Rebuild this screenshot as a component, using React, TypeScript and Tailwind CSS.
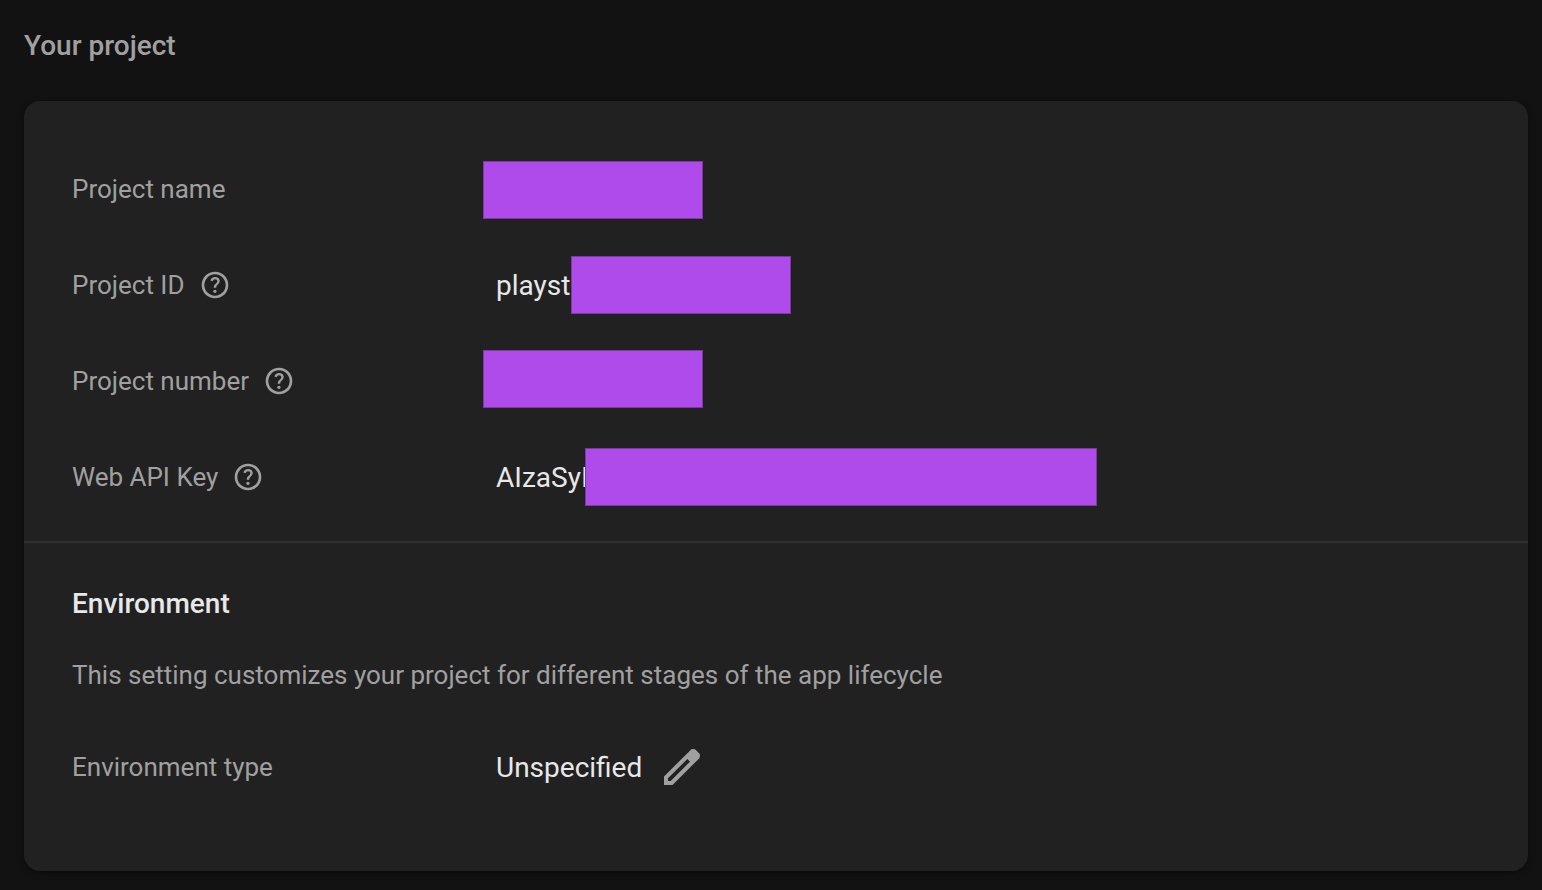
import React from "react";

const HelpIcon = () => (
	<svg viewBox="0 -960 960 960" className="size-8 fill-current" aria-hidden="true">
		<path d="M478-240q21 0 35.5-14.5T528-290q0-21-14.5-35.5T478-340q-21 0-35.5 14.5T428-290q0 21 14.5 35.5T478-240Zm-36-154h74q0-33 7.5-52t42.5-52q26-26 41-49.5t15-56.5q0-56-41-86t-97-30q-57 0-92.5 30T342-618l66 26q5-18 22.5-39t53.5-21q32 0 48 17.5t16 38.5q0 20-12 37.5T506-526q-44 39-54 59t-10 73Zm38 314q-83 0-156-31.5T197-197q-54-54-85.5-127T80-480q0-83 31.5-156T197-763q54-54 127-85.5T480-880q83 0 156 31.5T763-763q54 54 85.5 127T880-480q0 83-31.5 156T763-197q-54 54-127 85.5T480-80Zm0-80q134 0 227-93t93-227q0-134-93-227t-227-93q-134 0-227 93t-93 227q0 134 93 227t227 93Z" />
	</svg>
);

const EditIcon = () => (
	<svg viewBox="0 0 24 24" className="size-12 fill-current" aria-hidden="true">
		<path
			fillRule="evenodd"
			d="M3 21v-4.25L16.2 3.58q.3-.28.66-.43Q17.23 3 17.63 3q.4 0 .77.15.38.15.65.45l1.38 1.4q.3.28.43.65.14.37.14.75 0 .4-.14.76-.14.37-.43.67L7.25 21H3Zm2-2h1.33l9.67-9.68-1.32-1.32L5 17.67V19Z"
		/>
	</svg>
);

const rows = [
	{ label: "Project name", help: false, value: "", mask: "top-5 -left-[13px] w-[220px]" },
	{ label: "Project ID", help: true, value: "playsto", mask: "top-[19px] left-[75px] w-[220px]" },
	{ label: "Project number", help: true, value: "", mask: "top-[17px] -left-[13px] w-[220px]" },
	{ label: "Web API Key", help: true, value: "AIzaSyI", mask: "top-[19px] left-[89px] w-[512px]" },
];

const App = () => {
	return (
		<main className="min-h-screen bg-[#121212] pt-7 pr-3.5 pb-4 pl-6 font-['Roboto',sans-serif] text-[26px] leading-9 text-[#a0a0a0]">
			<h1 className="text-[28px] font-medium">Your project</h1>
			<div className="mt-[37px] rounded-2xl bg-[#212121] shadow-[0_2px_6px_rgba(0,0,0,0.5)]">
				<dl className="border-b-2 border-[#303030] px-12 pt-10 pb-4">
					{rows.map((row) => (
						<div className="flex h-24 items-center" key={row.label}>
							<dt className="flex w-[424px] shrink-0 items-center gap-3.5">
								{row.label}
								{row.help && (
									<button type="button" aria-label={`About ${row.label}`}>
										<HelpIcon />
									</button>
								)}
							</dt>
							<dd className="relative flex h-full items-center text-[28px] text-[#e8e8e8]">
								<span className="pt-0.5">{row.value}</span>
								<span
									className={`absolute h-[58px] border border-[#7c3a9f] bg-[#af4bea] ${row.mask}`}
								/>
							</dd>
						</div>
					))}
				</dl>
				<section className="px-12 pt-[43px] pb-14">
					<h2 className="text-[28px] font-medium text-[#e8e8e8]">Environment</h2>
					<p className="mt-[35px]">
						This setting customizes your project for different stages of the app lifecycle
					</p>
					<dl className="mt-[26px] flex h-24 items-center">
						<dt className="w-[424px] shrink-0">Environment type</dt>
						<dd className="flex items-center gap-4 text-[28px] text-[#e8e8e8]">
							<span className="pt-0.5">Unspecified</span>
							<button
								type="button"
								aria-label="Edit environment type"
								className="text-[#a0a0a0]"
							>
								<EditIcon />
							</button>
						</dd>
					</dl>
				</section>
			</div>
		</main>
	);
};

export default App;
